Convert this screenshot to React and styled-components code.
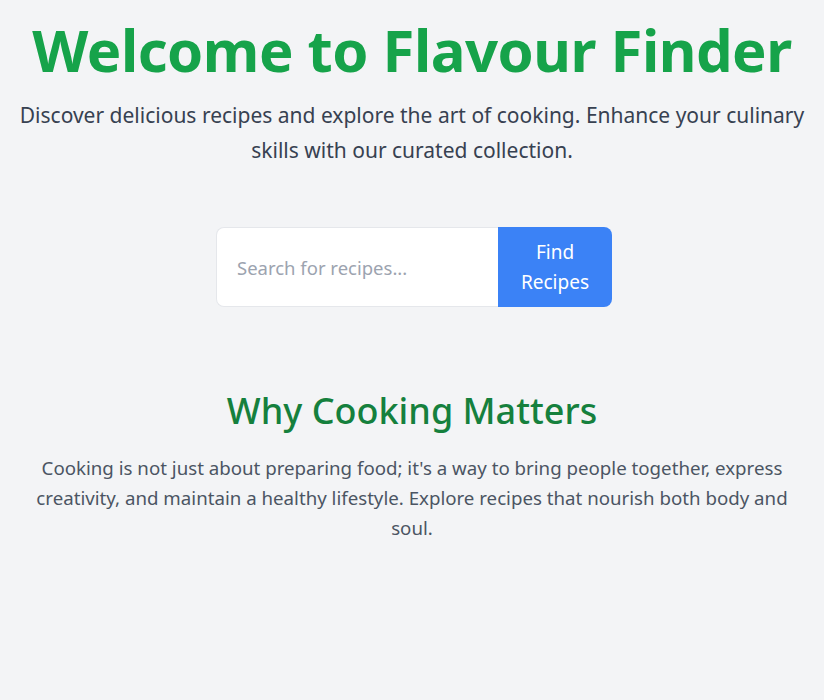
import React from 'react'
import styled, { createGlobalStyle } from 'styled-components';

const GlobalStyle = createGlobalStyle`
    body {
        margin:0;
        background:#f3f4f6;
        font-family:"Noto Sans", "Open Sans", sans-serif;
    }
`;

const Page = styled.div`
    min-height:700px;
    padding:14px 16px 0;
    box-sizing:border-box;
    display:flex;
    flex-direction:column;
    align-items:center;
    text-align:center;
`;

const Hero = styled.header`
    display:flex;
    flex-direction:column;
    align-items:center;
`;

const Title = styled.h1`
    margin:0;
    font-size:58px;
    line-height:72px;
    font-weight:700;
    color:#16a34a;
    letter-spacing:-0.5px;
`;

const Subtitle = styled.p`
    margin:12px 0 0;
    font-size:21px;
    line-height:35px;
    color:#374151;
    max-width:800px;
`;

const SearchForm = styled.form`
    display:flex;
    margin:59px 0 0 4px;
    width:396px;
    height:80px;
`;

const SearchInput = styled.input`
    flex:1;
    min-width:0;
    padding:0 20px;
    border:1px solid #e5e7eb;
    border-right:none;
    border-radius:8px 0 0 8px;
    background:#fff;
    font-family:inherit;
    font-size:18.5px;
    color:#374151;
    outline:none;
    &::placeholder {
        color:#9ca3af;
    }
`;

const SearchButton = styled.button`
    width:114px;
    border:none;
    border-radius:0 8px 8px 0;
    background:#3b82f6;
    color:#fff;
    font-family:inherit;
    font-size:19px;
    line-height:30px;
    padding:0 20px;
    cursor:pointer;
`;

const Section = styled.section`
    margin-top:82px;
    max-width:776px;
`;

const SectionTitle = styled.h2`
    margin:0;
    font-size:36px;
    line-height:44px;
    font-weight:500;
    color:#15803d;
`;

const SectionText = styled.p`
    margin:20px 0 0;
    font-size:18.7px;
    line-height:30px;
    color:#4b5563;
`;

export default function App() {
  return (
    <Page>
      <GlobalStyle/>
      <Hero>
        <Title>Welcome to Flavour Finder</Title>
        <Subtitle>Discover delicious recipes and explore the art of cooking. Enhance your culinary skills with our curated collection.</Subtitle>
      </Hero>
      <SearchForm onSubmit={e=>e.preventDefault()}>
        <SearchInput type="text" placeholder="Search for recipes..."/>
        <SearchButton type="submit">Find Recipes</SearchButton>
      </SearchForm>
      <Section>
        <SectionTitle>Why Cooking Matters</SectionTitle>
        <SectionText>Cooking is not just about preparing food; it's a way to bring people together, express creativity, and maintain a healthy lifestyle. Explore recipes that nourish both body and soul.</SectionText>
      </Section>
    </Page>
  )
}
